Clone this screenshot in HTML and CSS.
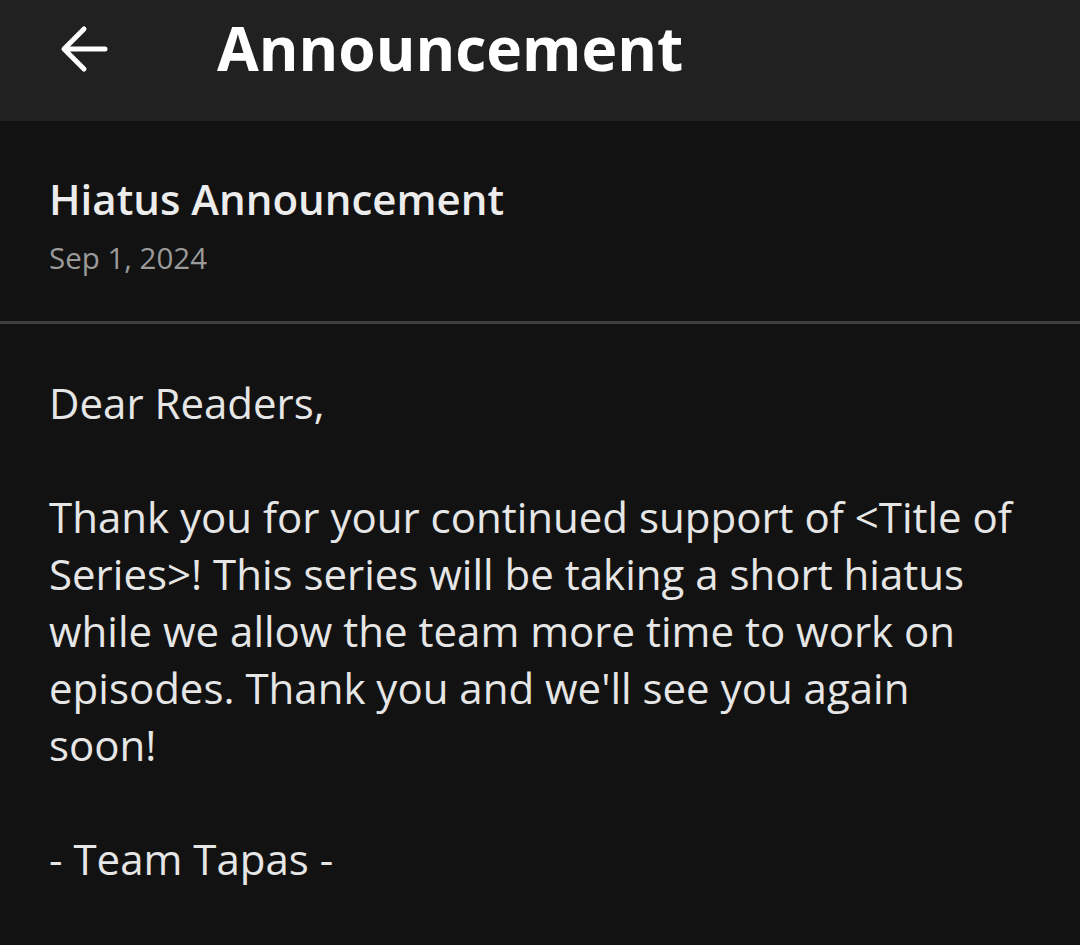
FILE: index.html
```html
<!DOCTYPE html>
<html>
<head>
<meta charset="utf-8">
<link rel="stylesheet" href="styles.css">
</head>
<body>
<header class="topbar">
  <svg class="back" viewBox="0 0 48 48" width="48" height="48">
    <path d="M45 24H5M24 4L4 24l20 20" fill="none" stroke="#fff" stroke-width="5" stroke-linecap="round" stroke-linejoin="round"/>
  </svg>
  <h1 class="title">Announcement</h1>
</header>
<section class="meta">
  <h2 class="post-title">Hiatus Announcement</h2>
  <div class="date">Sep 1, 2024</div>
</section>
<article class="content">
  <p>Dear Readers,</p>
  <p>Thank you for your continued support of &lt;Title of Series&gt;! This series will be taking a short hiatus while we allow the team more time to work on episodes. Thank you and we'll see you again soon!</p>
  <p>- Team Tapas -</p>
</article>
</body>
</html>
```
FILE: styles.css
```css
html, body {
  margin: 0;
  padding: 0;
  background: #121212;
  font-family: "Open Sans", "Noto Sans", sans-serif;
}
.topbar {
  height: 121px;
  background: #212121;
  display: flex;
  align-items: center;
  padding: 0 0 24px 60px;
  box-sizing: border-box;
}
.back {
  display: block;
  flex: none;
}
.title {
  margin: 0 0 0 109px;
  color: #fff;
  font-weight: 700;
  font-size: 60.5px;
  line-height: 1;
}
.meta {
  padding: 50px 49px 43px;
  border-bottom: 3px solid #3e3e3e;
}
.post-title {
  margin: 0;
  color: #ececec;
  font-weight: 600;
  font-size: 42px;
  line-height: 56px;
}
.date {
  margin-top: 11px;
  color: #9a9a9a;
  font-size: 29.5px;
  line-height: 40px;
}
.content {
  padding: 50px 60px 0 49px;
  color: #e6e6e6;
  font-size: 42px;
  line-height: 57px;
}
.content p {
  margin: 0 0 57px;
}
```
